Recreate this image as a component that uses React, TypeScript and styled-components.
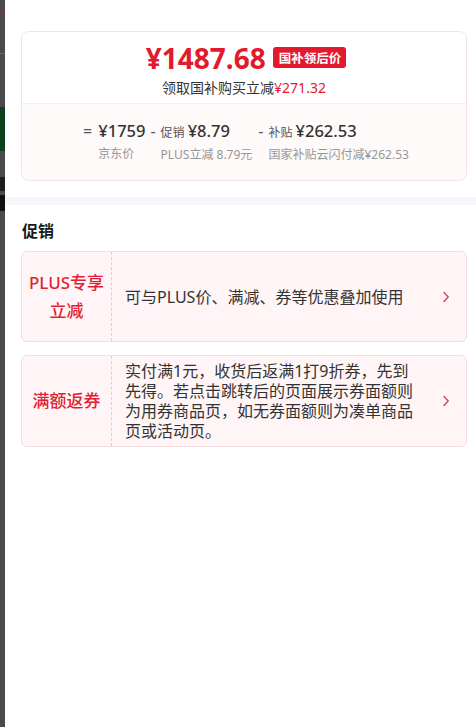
import styled, { createGlobalStyle } from "styled-components";

const GlobalStyle = createGlobalStyle`
    html, body {
        margin: 0;
        padding: 0;
        background: #fff;
    }
    body {
        font-family: "Noto Sans", "Noto Sans CJK SC", sans-serif;
        color: #1a1a1a;
    }
`

const Page = styled.div`
    display: flex;
    width: 476px;
    height: 727px;
    overflow: hidden;
`

const Backdrop = styled.div`
    width: 5px;
    flex-shrink: 0;
    display: flex;
    flex-direction: column;
    background: #4a4a4a;
`

const Fragment = styled.div<{ $h: number; $color?: string }>`
    height: ${(p) => p.$h}px;
    flex-shrink: 0;
    background: ${(p) => p.$color || "transparent"};
`

const Drawer = styled.div`
    flex: 1;
    background: #fff;
    display: flex;
    flex-direction: column;
`

const Section = styled.div`
    padding: 0 9px 0 16px;
`

const PriceCard = styled.div`
    margin-top: 31px;
    border: 1px solid #f2e3e6;
    border-radius: 8px;
    overflow: hidden;
`

const PriceTop = styled.div`
    height: 71px;
    display: flex;
    flex-direction: column;
    align-items: center;
    justify-content: center;
    background: #fff;
    border-bottom: 1px solid #f8eef0;
`

const PriceLine = styled.div`
    display: flex;
    align-items: center;
    gap: 7px;
    margin-top: 4px;
    margin-left: 4px;
`

const BigPrice = styled.span`
    font-size: 28px;
    font-weight: 700;
    color: #e3192e;
    line-height: 32px;
`

const Badge = styled.span`
    background: #e3192e;
    color: #fff;
    font-size: 12.5px;
    font-weight: 700;
    line-height: 21px;
    padding: 0 5px 0 6px;
    border-radius: 3px;
    font-family: "Noto Sans CJK SC", sans-serif;
`

const SubLine = styled.div`
    font-size: 14px;
    color: #333;
    line-height: 20px;
    margin-top: 3px;
    font-family: "Noto Sans CJK SC", sans-serif;
`

const Red = styled.span`
    color: #e3192e;
    font-family: "Noto Sans", "Noto Sans CJK SC", sans-serif;
`

const PriceBottom = styled.div`
    height: 76px;
    background: #fffafa;
    display: flex;
    justify-content: center;
    align-items: flex-start;
    padding: 15px 0 0 4px;
    box-sizing: border-box;
`

const Sign = styled.span<{ $gap: number }>`
    font-size: 16px;
    color: #555;
    line-height: 24px;
    margin-right: ${(p) => p.$gap}px;
`

const Col = styled.div<{ $after: number }>`
    display: flex;
    flex-direction: column;
    margin-right: ${(p) => p.$after}px;
`

const Value = styled.div`
    display: flex;
    align-items: baseline;
    gap: 3px;
    font-size: 16.5px;
    font-weight: 500;
    color: #333;
    line-height: 24px;
`

const Tag = styled.span`
    font-size: 12px;
    color: #555;
    font-weight: 400;
    font-family: "Noto Sans CJK SC", sans-serif;
`

const Label = styled.div`
    font-size: 12px;
    color: #979797;
    line-height: 16px;
    margin-top: 3px;
    white-space: nowrap;
`

const Band = styled.div`
    height: 8px;
    margin-top: 16px;
    background: #f6f7fb;
`

const Title = styled.div`
    font-size: 16px;
    font-weight: 700;
    color: #1a1a1a;
    line-height: 22px;
    margin: 14px 0 0 17px;
    font-family: "Noto Sans CJK SC", sans-serif;
`

const PromoList = styled.div`
    display: flex;
    flex-direction: column;
    gap: 13px;
    margin-top: 10px;
`

const PromoCard = styled.div`
    display: flex;
    min-height: 91px;
    background: #fff5f6;
    border: 1px solid #f4dde1;
    border-radius: 6px;
    box-sizing: border-box;
`

const PromoLabel = styled.div`
    width: 89px;
    flex-shrink: 0;
    display: flex;
    align-items: center;
    justify-content: center;
    text-align: center;
    border-right: 1px dashed #efc7ce;
    font-size: 17px;
    font-weight: 500;
    line-height: 28px;
    color: #e11f35;
    font-family: "Noto Sans", "Noto Sans CJK SC", sans-serif;
`

const PromoText = styled.div`
    flex: 1;
    display: flex;
    align-items: center;
    padding: 5px 0 5px 13px;
    font-size: 16px;
    line-height: 20px;
    color: #333;
    font-family: "Noto Sans", "Noto Sans CJK SC", sans-serif;
`

const TextBox = styled.div`
    width: 292px;
`

const Arrow = styled.div`
    width: 32px;
    flex-shrink: 0;
    display: flex;
    align-items: center;
    justify-content: center;
    padding-right: 4px;
`

function Chevron() {
    return (
        <svg width="8" height="12" viewBox="0 0 8 12">
            <path d="M2 1.5 L6.2 6 L2 10.5" fill="none" stroke="#c9485c" strokeWidth="1.4" strokeLinecap="round" strokeLinejoin="round" />
        </svg>
    )
}

const promos = [
    { label: ["PLUS专享", "立减"], text: "可与PLUS价、满减、券等优惠叠加使用" },
    { label: ["满额返券"], text: "实付满1元，收货后返满1打9折券，先到先得。若点击跳转后的页面展示券面额则为用券商品页，如无券面额则为凑单商品页或活动页。" },
]

function App() {
    return (
        <>
            <GlobalStyle />
            <Page>
                <Backdrop>
                    <Fragment $h={12} />
                    <Fragment $h={1} $color="#7a3838" />
                    <Fragment $h={40} />
                    <Fragment $h={1} $color="#6a6a6a" />
                    <Fragment $h={53} />
                    <Fragment $h={44} $color="#0c3f1d" />
                    <Fragment $h={26} />
                    <Fragment $h={14} $color="#1d1d1d" />
                    <Fragment $h={4} />
                    <Fragment $h={16} $color="#111" />
                </Backdrop>
                <Drawer>
                    <Section>
                        <PriceCard>
                            <PriceTop>
                                <PriceLine>
                                    <BigPrice>¥1487.68</BigPrice>
                                    <Badge>国补领后价</Badge>
                                </PriceLine>
                                <SubLine>领取国补购买立减<Red>¥271.32</Red></SubLine>
                            </PriceTop>
                            <PriceBottom>
                                <Sign $gap={6}>=</Sign>
                                <Col $after={5}>
                                    <Value>¥1759</Value>
                                    <Label>京东价</Label>
                                </Col>
                                <Sign $gap={5}>-</Sign>
                                <Col $after={6}>
                                    <Value><Tag>促销</Tag>¥8.79</Value>
                                    <Label>PLUS立减 8.79元</Label>
                                </Col>
                                <Sign $gap={5}>-</Sign>
                                <Col $after={0}>
                                    <Value><Tag>补贴</Tag>¥262.53</Value>
                                    <Label>国家补贴云闪付减¥262.53</Label>
                                </Col>
                            </PriceBottom>
                        </PriceCard>
                    </Section>
                    <Band />
                    <Title>促销</Title>
                    <Section>
                        <PromoList>
                            {promos.map((p) => (
                                <PromoCard key={p.text}>
                                    <PromoLabel>
                                        <div>
                                            {p.label.map((l) => (
                                                <div key={l}>{l}</div>
                                            ))}
                                        </div>
                                    </PromoLabel>
                                    <PromoText>
                                        <TextBox>{p.text}</TextBox>
                                    </PromoText>
                                    <Arrow>
                                        <Chevron />
                                    </Arrow>
                                </PromoCard>
                            ))}
                        </PromoList>
                    </Section>
                </Drawer>
            </Page>
        </>
    )
}

export default App;
